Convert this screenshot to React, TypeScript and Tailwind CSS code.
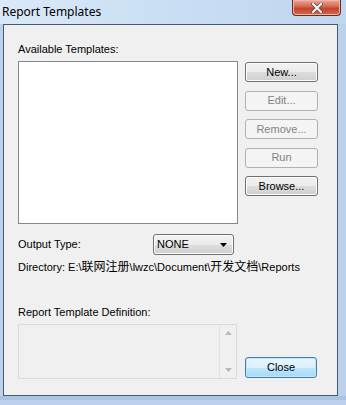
import type { ReactNode } from "react"

const ui = { fontFamily: '"Liberation Sans", "Noto Sans CJK SC", Arial, sans-serif' }

function Btn({ children, disabled }: { children: ReactNode; disabled?: boolean }) {
  if (disabled) {
    return (
      <div className="flex h-[20px] w-[73px] items-center justify-center rounded-[3px] border border-[#adb2b5] bg-[#f4f4f4] text-[11px] text-[#838383]">
        {children}
      </div>
    )
  }
  return (
    <div className="flex h-[20px] w-[73px] items-center justify-center rounded-[3px] border border-[#707070] bg-[linear-gradient(#f2f2f2_0%,#ebebeb_50%,#dddddd_51%,#cfcfcf_100%)] text-[11px] text-black shadow-[inset_0_0_0_1px_#fcfcfc]">
      {children}
    </div>
  )
}

export default function App() {
  return (
    <div className="relative h-[405px] w-[346px] overflow-hidden bg-[#bcd2ea]" style={ui}>
      {/* title bar */}
      <div className="flex h-[24px] items-start justify-between bg-[linear-gradient(90deg,#dae9f8_0%,#cadff4_45%,#bfd6ef_100%)]">
        <div className="pl-[2px] pt-[3px] text-[12px] text-black" style={{ fontFamily: '"Noto Sans", "Open Sans", sans-serif' }}>
          Report Templates
        </div>
        <div className="mr-[5px] flex h-[16px] w-[49px] items-center justify-center rounded-b-[4px] border border-t-0 border-[#6d2a1f] bg-[linear-gradient(#e9a99c_0%,#d5654f_45%,#c2432b_55%,#d16b50_100%)] shadow-[inset_0_0_0_1px_#eeb4a6]">
          <svg width="12" height="10" viewBox="0 0 12 10">
            <path d="M2 1 L10 9 M10 1 L2 9" stroke="#4a4a4a" strokeWidth="3.4" strokeLinecap="square" />
            <path d="M2 1 L10 9 M10 1 L2 9" stroke="#ffffff" strokeWidth="2" strokeLinecap="square" />
          </svg>
        </div>
      </div>

      {/* client area */}
      <div className="ml-[3px] mr-[8px] h-[372px] border border-[#47596e] bg-[#f0f0f0] pl-[14px] pt-[18px] text-[11px] text-black">
        <div className="leading-[13px]">Available Templates:</div>
        <div className="mt-[5px] flex">
          <div className="h-[163px] w-[220px] border border-[#828790] bg-white" />
          <div className="ml-[7px] mt-[1px] flex flex-col gap-[8.5px]">
            <Btn>New...</Btn>
            <Btn disabled>Edit...</Btn>
            <Btn disabled>Remove...</Btn>
            <Btn disabled>Run</Btn>
            <Btn>Browse...</Btn>
          </div>
        </div>

        <div className="mt-[10px] flex items-center">
          <div className="w-[135px] leading-[13px]">Output Type:</div>
          <div className="flex h-[21px] w-[81px] items-center justify-between rounded-[3px] border border-[#707070] bg-[linear-gradient(#f2f2f2_0%,#ebebeb_50%,#dddddd_51%,#cfcfcf_100%)] pl-[3px] pr-[6px] text-[11px] shadow-[inset_0_0_0_1px_#fcfcfc]">
            <span>NONE</span>
            <svg width="7" height="4" viewBox="0 0 7 4">
              <path d="M0 0 H7 L3.5 4 Z" fill="#000" />
            </svg>
          </div>
        </div>

        <div className="mt-[6px] leading-[13px]">
          Directory: E:\<span className="text-[12px]">联网注册</span>\lwzc\Document\<span className="text-[12px]">开发文档</span>\Reports
        </div>

        <div className="mt-[32px] leading-[13px]">Report Template Definition:</div>
        <div className="mt-[5px] flex items-end">
          <div className="flex h-[55px] w-[219px] border border-[#dadada] bg-[#f0f0f0]">
            <div className="flex-1" />
            <div className="flex w-[17px] flex-col items-center justify-between border-l border-[#e3e3e3] py-[6px]">
              <svg width="7" height="4" viewBox="0 0 7 4">
                <path d="M0 4 H7 L3.5 0 Z" fill="#b8b8b8" />
              </svg>
              <svg width="7" height="4" viewBox="0 0 7 4">
                <path d="M0 0 H7 L3.5 4 Z" fill="#b8b8b8" />
              </svg>
            </div>
          </div>
          <div className="mb-[1px] ml-[8px] flex h-[21px] w-[72px] items-center justify-center rounded-[3px] border border-[#3c7fb1] bg-[linear-gradient(#eaf6fd_0%,#d9f0fc_50%,#bee6fd_51%,#a7d9f5_100%)] text-[11px] shadow-[inset_0_0_0_1px_#bfe6fb]">
            Close
          </div>
        </div>
      </div>
      <div className="h-[4px] bg-[#a9c3e0]" />
    </div>
  )
}
